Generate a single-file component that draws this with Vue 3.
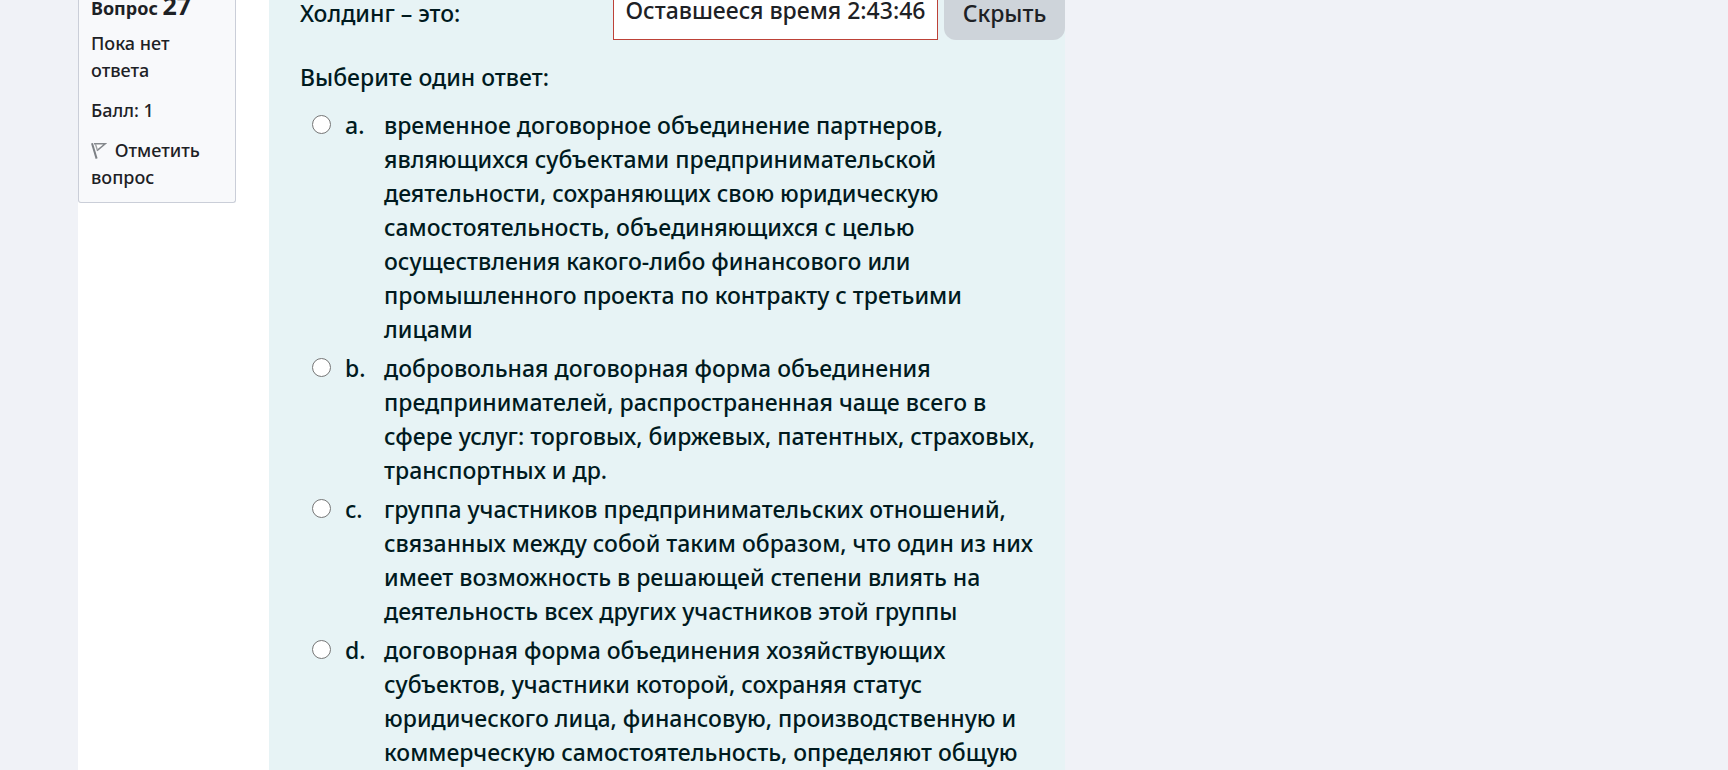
<script setup>
import { ref } from 'vue'

const selected = ref('')

const answers = [
  {
    key: 'a',
    lines: [
      'временное договорное объединение партнеров,',
      'являющихся субъектами предпринимательской',
      'деятельности, сохраняющих свою юридическую',
      'самостоятельность, объединяющихся с целью',
      'осуществления какого-либо финансового или',
      'промышленного проекта по контракту с третьими',
      'лицами',
    ],
  },
  {
    key: 'b',
    lines: [
      'добровольная договорная форма объединения',
      'предпринимателей, распространенная чаще всего в',
      'сфере услуг: торговых, биржевых, патентных, страховых,',
      'транспортных и др.',
    ],
  },
  {
    key: 'c',
    lines: [
      'группа участников предпринимательских отношений,',
      'связанных между собой таким образом, что один из них',
      'имеет возможность в решающей степени влиять на',
      'деятельность всех других участников этой группы',
    ],
  },
  {
    key: 'd',
    lines: [
      'договорная форма объединения хозяйствующих',
      'субъектов, участники которой, сохраняя статус',
      'юридического лица, финансовую, производственную и',
      'коммерческую самостоятельность, определяют общую',
    ],
  },
]
</script>

<template>
  <div class="page">
    <main class="quiz">
      <aside class="side">
        <div class="info">
          <h3 class="number">Вопрос <span class="digits">27</span></h3>
          <p class="state">Пока нет ответа</p>
          <p class="grade">Балл: 1</p>
          <a class="flag" href="#">
            <svg class="flag-icon" viewBox="0 0 16 18" aria-hidden="true">
              <path d="M1 1.2L5.6 16.6" stroke="#7d8185" stroke-width="2" fill="none" />
              <path d="M3 1.8H14.2L6 8.6" stroke="#85898d" stroke-width="1.5" fill="#ffffff" />
              <path d="M4.4 2L6.4 8.2" stroke="#a0a3a6" stroke-width="1.4" fill="none" />
            </svg>
            Отметить вопрос
          </a>
        </div>
      </aside>

      <form class="question">
        <p class="text">Холдинг – это:</p>
        <fieldset class="answers">
          <legend class="prompt">Выберите один ответ:</legend>
          <div v-for="a in answers" :key="a.key" class="row">
            <input :id="'answer-' + a.key" v-model="selected" class="radio" type="radio" name="answer" :value="a.key" />
            <label class="label" :for="'answer-' + a.key">
              <span class="letter">{{ a.key }}.</span>
              <span class="body">{{ a.lines.join('\n') }}</span>
            </label>
          </div>
        </fieldset>
      </form>

      <div class="timer-bar">
        <div class="timer" role="timer">Оставшееся время 2:43:46</div>
        <button class="hide" type="button">Скрыть</button>
      </div>
    </main>
  </div>
</template>

<style>
body {
  background: #f0f2f7;
  overflow: hidden;
}
</style>

<style scoped>
.page {
  height: 100vh;
  overflow: hidden;
  padding-left: 78px;
  font-family: "Noto Sans", "Open Sans", sans-serif;
  font-weight: 500;
  color: #1d2125;
}

.quiz {
  position: relative;
  display: flex;
  min-height: 100%;
  max-width: 987px;
  background: #ffffff;
}

.side {
  flex: 0 0 191px;
}

.info {
  width: 158px;
  box-sizing: border-box;
  margin-top: -7px;
  padding: 0 12px 11px;
  border: 1px solid #caced8;
  border-top: 0;
  border-radius: 0 0 3px 3px;
  background: #f8f9fb;
  font-size: 18px;
  line-height: 27px;
}

.info p {
  margin: 0 0 13px;
}

.number {
  margin: 0 0 10px;
  font-size: 18px;
  font-weight: 700;
  line-height: 24px;
}

.digits {
  font-size: 25px;
}

.flag {
  display: block;
  color: inherit;
  text-decoration: none;
}

.flag-icon {
  width: 16px;
  height: 18px;
  margin-right: 3px;
  vertical-align: -3px;
}

.question {
  flex: 1;
  min-width: 0;
  padding: 0 31px;
  background: #e7f3f5;
  color: #001a1e;
  font-size: 23px;
  line-height: 34px;
}

.text {
  margin: -4px 0 30px;
}

.answers {
  margin: 0;
  padding: 0;
  border: 0;
}

.prompt {
  padding: 0;
  margin-bottom: 14px;
}

.row {
  display: flex;
  align-items: flex-start;
  margin-bottom: 5px;
  padding-left: 12px;
}

.radio {
  appearance: none;
  flex: none;
  box-sizing: border-box;
  width: 19px;
  height: 19px;
  margin: 7px 14px 0 0;
  border: 1px solid #767676;
  border-radius: 50%;
  background: #ffffff;
}

.radio:checked {
  border: 6px solid #0f6cbf;
}

.label {
  display: flex;
}

.letter {
  flex: 0 0 39px;
}

.body {
  white-space: pre;
}

.timer-bar {
  position: absolute;
  top: -12px;
  right: 0;
  display: flex;
  gap: 6px;
  font-size: 23px;
}

.timer {
  box-sizing: border-box;
  width: 325px;
  height: 52px;
  border: 1px solid #bd4238;
  background: #ffffff;
  line-height: 43px;
  text-align: center;
  white-space: nowrap;
}

.hide {
  width: 121px;
  height: 52px;
  padding: 0 0 2px;
  border: 0;
  border-radius: 0 0 12px 12px;
  background: #ced4da;
  color: #1d2125;
  font: inherit;
}
</style>
